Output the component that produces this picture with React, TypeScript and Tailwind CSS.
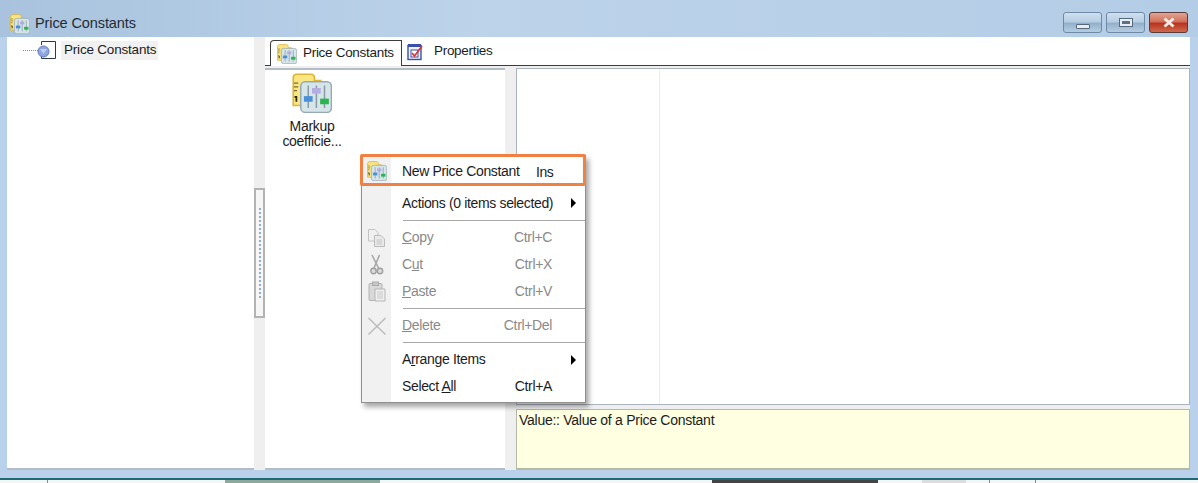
import React from 'react';

const FONT = "font-['Liberation_Sans',Arial,sans-serif]";

// folder sheet with the sliders tile, used for the title, tab, menu and list icons
const PriceIcon = ({ size = 16 }: { size?: number }) => (
  <svg width={size} height={size} viewBox="0 0 32 32" className="shrink-0">
    <path d="M1 4 Q1 1 4 1 H15 Q18 1 18 4 V6 H23 V26 H1 Z" fill="#f9e680" stroke="#dcb53a" strokeWidth="1.3" />
    <path d="M1.5 8 H5 M1.5 11 H5 M1.5 14 H4" stroke="#7d6f2c" strokeWidth="1" />
    <path d="M2 19 H3.5 V23" stroke="#2a2a10" strokeWidth="1.4" fill="none" />
    <rect x="7" y="7" width="24.5" height="24.5" rx="3.5" fill="#d6e5ea" stroke="#98a9b2" strokeWidth="1.2" />
    <path d="M13 10 V28 M19.5 10 V28 M26 10 V28" stroke="#8b9aa3" strokeWidth="1.2" />
    <rect x="9.5" y="18.5" width="7" height="4.5" fill="#4a90d6" />
    <rect x="16" y="12" width="7" height="4.5" fill="#b3adE2" />
    <rect x="22.5" y="20.5" width="7" height="4.5" fill="#2ab550" />
  </svg>
);

const TreeNodeIcon = () => (
  <svg width="19" height="20" viewBox="0 0 19 20" className="shrink-0">
    <path d="M4.5 5 V1.5 H18.5 V18.5 H4.5 V16" fill="#fff" stroke="#2c3a4a" strokeWidth="1" />
    <circle cx="6.5" cy="11.5" r="5.5" fill="#8ea6de" stroke="#5f7cb8" />
    <path d="M3 9 L6.5 14 L10 9 Z" fill="#bccbf0" />
  </svg>
);

const PropertiesIcon = () => (
  <svg width="17" height="18" viewBox="0 0 17 18" className="shrink-0">
    <rect x="1" y="2.5" width="13" height="14" fill="#eef2fb" stroke="#3a4fa8" strokeWidth="1.4" />
    <rect x="1" y="1" width="13" height="3" fill="#3a4fa8" />
    <rect x="4" y="7" width="7" height="7" fill="#fff" stroke="#3a4fa8" />
    <path d="M5 10 L7.5 13 L15 3" fill="none" stroke="#d8342c" strokeWidth="1.7" />
  </svg>
);

const CopyIcon = () => (
  <svg width="19" height="20" viewBox="0 0 19 20">
    <path d="M1.5 1.5 H8 L11 4.5 V13 H1.5 Z" fill="#f0f0f0" stroke="#c4c4c4" />
    <path d="M7.5 7.5 H14 L17.5 11 V18.5 H7.5 Z" fill="#e9e9e9" stroke="#bcbcbc" />
    <path d="M9.5 12 H15 M9.5 14 H15 M9.5 16 H15" stroke="#c4c4c4" />
  </svg>
);

const CutIcon = () => (
  <svg width="15" height="21" viewBox="0 0 15 21">
    <path d="M3 1 L9.5 14 M10.5 1 L5 14" stroke="#a8a8a8" strokeWidth="1.6" fill="none" />
    <circle cx="4.5" cy="17" r="2.7" fill="#dcdcdc" stroke="#a0a0a0" strokeWidth="1.4" />
    <circle cx="11" cy="17" r="2.7" fill="#dcdcdc" stroke="#a0a0a0" strokeWidth="1.4" />
  </svg>
);

const PasteIcon = () => (
  <svg width="18" height="21" viewBox="0 0 18 21">
    <rect x="1" y="2.5" width="13" height="17" rx="1" fill="#d8d8d8" stroke="#b2b2b2" />
    <rect x="4.5" y="1" width="6" height="3.5" fill="#c8c8c8" stroke="#aaa" />
    <path d="M7 8 H17 V20 H7 Z" fill="#efefef" stroke="#b5b5b5" />
    <path d="M9 11 H15 M9 13 H15 M9 15 H15 M9 17 H15" stroke="#c8c8c8" />
  </svg>
);

const DeleteIcon = () => (
  <svg width="20" height="20" viewBox="0 0 20 20">
    <path d="M1.5 2 L18.5 18.5 M18.5 2 L1.5 18.5" stroke="#bdbdbd" strokeWidth="1.6" />
  </svg>
);

const Arrow = () => <span className="ml-auto mr-[9px] h-0 w-0 border-y-[5px] border-l-[5px] border-y-transparent border-l-black" />;

const Sep = () => <div className="my-[3px] ml-[41px] h-px bg-[#a8a8a8]" />;

type RowProps = {
  icon?: React.ReactNode;
  label: React.ReactNode;
  shortcut?: string;
  arrow?: boolean;
  disabled?: boolean;
  h?: string;
};

const Row = ({ icon, label, shortcut, arrow, disabled, h = 'h-[27px]' }: RowProps) => (
  <div className={`relative flex ${h} items-center text-[14px] tracking-[-0.35px] ${disabled ? 'text-[#8a8a8a]' : 'text-[#1c1c1c]'}`}>
    <div className="flex w-[29px] shrink-0 justify-center">{icon}</div>
    <div className="ml-[11px] whitespace-nowrap">{label}</div>
    {shortcut && <div className="absolute right-[33px] whitespace-nowrap">{shortcut}</div>}
    {arrow && <Arrow />}
  </div>
);

const WinButton = ({ kind }: { kind: 'min' | 'max' | 'close' }) => {
  if (kind === 'close') {
    return (
      <div className="flex h-[21px] w-[39px] items-center justify-center rounded-[3px] border border-[#5b3a3a] bg-[linear-gradient(#e3a594,#d0705a_45%,#b8341f_55%,#cf6a4c)]">
        <svg width="14" height="11" viewBox="0 0 14 11">
          <path d="M2.5 1.5 L11.5 9.5 M11.5 1.5 L2.5 9.5" stroke="#f3ece6" strokeWidth="3" />
        </svg>
      </div>
    );
  }
  return (
    <div className="flex h-[21px] w-[39px] items-center justify-center rounded-[3px] border border-[#6f8aa6] bg-[linear-gradient(#d0e0ef,#b7cee3_45%,#93b1cd_55%,#b5cde2)]">
      {kind === 'min' ? (
        <div className="mt-[7px] h-[5px] w-[14px] rounded-[1px] border border-[#56687c] bg-[#e8edf2]" />
      ) : (
        <div className="flex h-[9px] w-[14px] items-center justify-center border border-[#56687c] bg-[#e8edf2]">
          <div className="h-[3px] w-[8px] bg-[#5b6f85]" />
        </div>
      )}
    </div>
  );
};

export default function App() {
  return (
    <div className={`${FONT} relative flex h-[483px] w-[1198px] flex-col overflow-hidden bg-[#b9d1ea] text-[#1c1c1c]`}>
      {/* title bar */}
      <div className="flex h-[37px] shrink-0 items-start bg-[linear-gradient(90deg,#a9c3de,#bcd3ea_40%,#b4cde6)] pl-[10px] pr-[10px]">
        <div className="mt-[13px] flex items-center gap-[5px]">
          <PriceIcon size={20} />
          <span className="text-[14.5px] tracking-[-0.1px] text-[#232b36]">Price Constants</span>
        </div>
        <div className="ml-auto mt-[12px] flex gap-[4px]">
          <WinButton kind="min" />
          <WinButton kind="max" />
          <WinButton kind="close" />
        </div>
      </div>

      {/* client area */}
      <div className="flex h-[433px] shrink-0 pl-[7px] pr-[8px]">
        {/* tree */}
        <div className="w-[247px] shrink-0 border-b-2 border-[#b4bcc4] bg-white">
          <div className="mt-[3px] flex items-center">
            <div className="ml-[16px] mt-[1px] w-[15px] border-t border-dotted border-[#8a8a8a]" />
            <div className="-ml-[1px]"><TreeNodeIcon /></div>
            <div className="ml-[5px] flex h-[19px] w-[97px] items-center bg-[#f1f1f1] pl-[3px] text-[13.5px] tracking-[-0.2px]">Price Constants</div>
          </div>
        </div>

        {/* vertical splitter */}
        <div className="relative w-[11px] shrink-0 bg-[#efefef]">
          <div className="absolute left-0 top-[151px] flex h-[130px] w-[11px] justify-center border-2 border-[#b3b3b3] bg-[#f6f6f6] py-[18px]">
            <div className="h-full w-[2px] border-l-2 border-dotted border-[#8fb0c8]" />
          </div>
        </div>

        {/* right side: tabs and panes */}
        <div className="flex min-w-0 flex-1 flex-col bg-[#efefef]">
          <div className="flex h-[29px] shrink-0 items-end border-b border-[#3c3c3c] bg-white">
            <div className="relative -mb-px ml-[5px] flex h-[26px] w-[132px] items-center gap-[6px] rounded-tl-[4px] border border-b-0 border-[#3c3c3c] bg-white pl-[6px]">
              <PriceIcon size={20} />
              <span className="text-[13.5px] tracking-[-0.3px]">Price Constants</span>
            </div>
            <div className="flex h-[27px] items-center gap-[10px] pl-[5px]">
              <PropertiesIcon />
              <span className="text-[13.5px] tracking-[-0.3px]">Properties</span>
            </div>
          </div>

          <div className="mt-[2px] flex min-h-0 flex-1">
            {/* item list */}
            <div className="w-[240px] shrink-0 border-y-2 border-[#b4bcc4] bg-white pt-[3px]">
              <div className="flex w-[94px] flex-col items-center">
                <PriceIcon size={40} />
                <div className="mt-[6px] text-center text-[14px] leading-[15px] tracking-[-0.3px]">
                  Markup
                  <br />
                  coefficie...
                </div>
              </div>
            </div>
            <div className="w-[11px] shrink-0" />
            {/* detail and hint */}
            <div className="flex min-w-0 flex-1 flex-col">
              <div className="flex h-[337px] shrink-0 border border-[#a9b4bf] bg-white">
                <div className="w-[143px] border-r border-[#ededed]" />
              </div>
              <div className="h-[4px] shrink-0" />
              <div className="flex-1 border-x border-t border-b-2 border-[#b4b9a8] bg-[#ffffe1] pl-[2px] pt-[3px] text-[14px] leading-[15px] tracking-[-0.27px]">
                Value:: Value of a Price Constant
              </div>
            </div>
          </div>
        </div>
      </div>

      <div className="h-[8px] shrink-0" />
      {/* desktop showing under the window */}
      <div className="flex flex-1 border-t-2 border-[#1c6a73] bg-[#f4f6f5]">
        <div className="w-[48px] border-r border-[#8a8a8a]" />
        <div className="w-[177px]" />
        <div className="w-[155px] bg-[#8fa89a]" />
        <div className="w-[332px]" />
        <div className="w-[166px] bg-[#444444]" />
        <div className="w-[44px]" />
        <div className="w-[44px] bg-[#dddddd]" />
        <div className="w-[24px] border-r border-[#8a8a8a]" />
        <div className="w-[46px] border-r border-[#8a8a8a]" />
      </div>

      {/* context menu */}
      <div className="absolute left-[361px] top-[155px] h-[248px] w-[225px] border border-[#8f8f8f] bg-white shadow-[3px_4px_5px_rgba(0,0,0,0.35)]">
        <div className="absolute inset-y-0 left-0 w-[29px] bg-[#f1f1f1]" />
        <div className="relative">
          <Row icon={<PriceIcon size={20} />} label="New Price Constant" h="h-[30px]" />
          <div className="absolute left-[174px] top-[6px] text-[14px] tracking-[-0.5px]">Ins</div>
          <div className="h-[3px]" />
          <Row label="Actions (0 items selected)" arrow h="h-[28px]" />
          <Sep />
          <Row icon={<CopyIcon />} label={<><u>C</u>opy</>} shortcut="Ctrl+C" disabled />
          <Row icon={<CutIcon />} label={<>C<u>u</u>t</>} shortcut="Ctrl+X" disabled />
          <Row icon={<PasteIcon />} label={<><u>P</u>aste</>} shortcut="Ctrl+V" disabled />
          <Sep />
          <Row icon={<DeleteIcon />} label={<><u>D</u>elete</>} shortcut="Ctrl+Del" disabled />
          <Sep />
          <Row label={<>A<u>r</u>range Items</>} arrow />
          <Row label={<>Select <u>A</u>ll</>} shortcut="Ctrl+A" />
        </div>
      </div>
      {/* orange annotation round the first item */}
      <div className="absolute left-[360px] top-[154px] h-[32px] w-[226px] rounded-[2px] border-[3px] border-[#f08143]" />
    </div>
  );
}
